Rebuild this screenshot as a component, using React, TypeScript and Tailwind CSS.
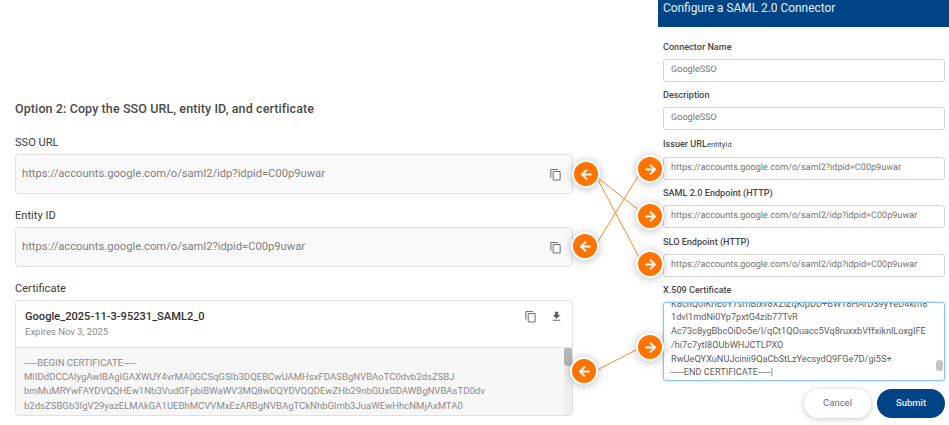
import { ArrowLeft, ArrowRight } from 'lucide-react'

const cx = 'rounded-[4px] border border-[#e0e0e0]'

function Field({ label, value }: { label: string; value: string }) {
  return (
    <div>
      <div className="h-[19px] text-[11.1px] leading-[16px] text-[#3c3c3c]">{label}</div>
      <div className={`flex h-[40px] items-center justify-between bg-[#f9f9f9] pl-[6px] pr-[10px] text-[11.2px] text-[#808080] ${cx}`}>
        <span>{value}</span>
        <CopyIcon />
      </div>
    </div>
  )
}

function CopyIcon() {
  return (
    <svg width="13" height="13" viewBox="0 0 14 14" fill="none" stroke="#6b6f73" strokeWidth="1.1">
      <path d="M9.5 1.5H3a1 1 0 0 0-1 1v8" />
      <rect x="4.5" y="3.8" width="7.5" height="9" rx="0.8" />
    </svg>
  )
}

function DownloadIcon() {
  return (
    <svg width="13" height="13" viewBox="0 0 24 24" fill="#5f6368">
      <path d="M19 9h-4V3H9v6H5l7 7 7-7zM5 18v2h14v-2H5z" />
    </svg>
  )
}

function FormField({ label, value, small, gap }: { label: string; value: string; small?: string; gap?: boolean }) {
  return (
    <div className={gap ? 'mb-[7px]' : 'mb-[6px]'}>
      <div className="mb-[5px] text-[9.1px] font-medium leading-[14px] text-[#484848]">
        {label}
        {small && <span className="text-[7.5px] font-normal">{small}</span>}
      </div>
      <div className="flex h-[23px] items-center whitespace-nowrap rounded-[3px] border border-[#d4d4d4] bg-white px-[7px] text-[9.1px] text-[#757575] [text-rendering:geometricPrecision]">
        {value}
      </div>
    </div>
  )
}

function Node({ dir, className }: { dir: 'left' | 'right'; className: string }) {
  return (
    <div className={`absolute flex h-[28px] w-[28px] items-center justify-center rounded-full border-[2px] border-white bg-[#ff7300] text-white shadow-[0_1px_8px_rgba(0,0,0,0.28)] ${className}`}>
      {dir === 'left' ? <ArrowLeft size={15} strokeWidth={3} /> : <ArrowRight size={15} strokeWidth={3} />}
    </div>
  )
}

export default function App() {
  return (
    <div className="relative flex h-[425px] w-[949px] overflow-hidden bg-white font-['Roboto',sans-serif]">
      {/* left side, google admin */}
      <div className="w-[658px] pl-[15px] pr-[85px] pt-[100px]">
        <h2 className="mb-[17px] text-[12.5px] font-medium leading-[18px] tracking-[0.1px] text-[#4a4a4a]">
          Option 2: Copy the SSO URL, entity ID, and certificate
        </h2>
        <div className="flex flex-col gap-[14px]">
          <Field label="SSO URL" value="https://accounts.google.com/o/saml2/idp?idpid=C00p9uwar" />
          <Field label="Entity ID" value="https://accounts.google.com/o/saml2?idpid=C00p9uwar" />
          <div>
            <div className="h-[19px] text-[11.1px] leading-[16px] text-[#3c3c3c]">Certificate</div>
            <div className={`h-[116px] overflow-hidden bg-white ${cx}`}>
              <div className="flex h-[47px] items-start justify-between border-b border-[#e0e0e0] pl-[9px] pr-[9px] pt-[8px]">
                <div>
                  <div className="text-[11.1px] font-medium leading-[16px] text-[#303030]">Google_2025-11-3-95231_SAML2_0</div>
                  <div className="text-[9.5px] leading-[14px] text-[#8a8a8a]">Expires Nov 3, 2025</div>
                </div>
                <div className="flex items-center gap-[13px] pt-[1px]">
                  <CopyIcon />
                  <DownloadIcon />
                </div>
              </div>
              <div className="relative h-[68px] bg-[#f7f7f7] pl-[8px] pt-[8px] text-[9.55px] leading-[14.2px] text-[#8a8a8a]">
                <div>-----BEGIN CERTIFICATE-----</div>
                <div>MIIDdDCCAlygAwIBAgIGAXWUY4vrMA0GCSqGSIb3DQEBCwUAMHsxFDASBgNVBAoTC0dvb2dsZSBJ</div>
                <div>bmMuMRYwFAYDVQQHEw1Nb3VudGFpbiBWaWV3MQ8wDQYDVQQDEwZHb29nbGUxGDAWBgNVBAsTD0dv</div>
                <div>b2dsZSBGb3IgV29yazELMAkGA1UEBhMCVVMxEzARBgNVBAgTCkNhbGlmb3JuaWEwHhcNMjAxMTA0</div>
                <div className="absolute right-0 top-0 h-full w-[8px] bg-[#efefef]">
                  <div className="h-[18px] rounded-[3px] bg-[#b5b5b5]" />
                </div>
              </div>
            </div>
          </div>
        </div>
      </div>

      {/* right side, connector form */}
      <div className="w-[291px]">
        <div className="h-[27px] bg-[#004488] pl-[5px] text-[11.9px] leading-[17px] text-[#e8eef5]">Configure a SAML 2.0 Connector</div>
        <div className="pl-[5px] pt-[13px]">
          <div className="w-[282px]">
            <FormField label="Connector Name" value="GoogleSSO" />
            <FormField label="Description" value="GoogleSSO" gap />
            <FormField label="Issuer URL" small="entityId" value="https://accounts.google.com/o/saml2?idpid=C00p9uwar" />
            <FormField label="SAML 2.0 Endpoint (HTTP)" value="https://accounts.google.com/o/saml2/idp?idpid=C00p9uwar" gap />
            <FormField label="SLO Endpoint (HTTP)" value="https://accounts.google.com/o/saml2/idp?idpid=C00p9uwar" />
            <div className="mb-[5px] text-[9.1px] font-medium leading-[14px] text-[#484848]">X.509 Certificate</div>
            <div className="relative flex h-[79px] flex-col justify-end overflow-hidden whitespace-nowrap rounded-[3px] border border-[#8cc4f0] bg-white pb-[1px] pl-[7px] text-[9.2px] leading-[13.7px] text-[#606060] shadow-[0_0_3px_#a9d4f5]">
              <div>K8chQ0lKrlE0Y7smBlxv8XZlZqKlpDD+BW18HArDS9yYeD4km8</div>
              <div>1dvl1mdNi0Yp7pxtG4zib77TvR</div>
              <div>Ac73c8ygBbcOiDo5e/l/qCt1QOuacc5Vq8ruxxbVffxiknlLoxgIFE</div>
              <div>/hi7c7ytI8OUbWHJCTLPXO</div>
              <div>RwUeQYXuNUJcinii9QaCbStLzYecsydQ9FGe7D/gi5S+</div>
              <div>-----END CERTIFICATE-----|</div>
              <div className="absolute bottom-[9px] right-[1px] h-[11px] w-[7px] rounded-[3px] bg-[#c4c4c4]" />
            </div>
            <div className="mt-[8px] flex justify-end gap-[6px]">
              <button className="h-[29px] w-[67px] rounded-full bg-white text-[9.5px] text-[#6e6e6e] shadow-[0_1px_6px_rgba(0,0,0,0.22)]">Cancel</button>
              <button className="h-[29px] w-[68px] rounded-full bg-[#004488] text-[9.5px] font-medium text-[#e8eef5]">Submit</button>
            </div>
          </div>
        </div>
      </div>

      {/* connector lines and arrows drawn over both sides */}
      <svg className="absolute left-0 top-0" width="949" height="425" fill="none" stroke="#ff8a2a" strokeWidth="1">
        <path d="M598 178 L640 211" />
        <path d="M597 178 L640 259" />
        <path d="M597 243 L640 173" />
        <path d="M597 370 L638 349" />
      </svg>
      <Node dir="left" className="left-[572px] top-[160px]" />
      <Node dir="left" className="left-[571px] top-[232px]" />
      <Node dir="left" className="left-[570px] top-[357px]" />
      <Node dir="right" className="left-[636px] top-[155px]" />
      <Node dir="right" className="left-[636px] top-[202px]" />
      <Node dir="right" className="left-[636px] top-[250px]" />
      <Node dir="right" className="left-[636px] top-[333px]" />
    </div>
  )
}
